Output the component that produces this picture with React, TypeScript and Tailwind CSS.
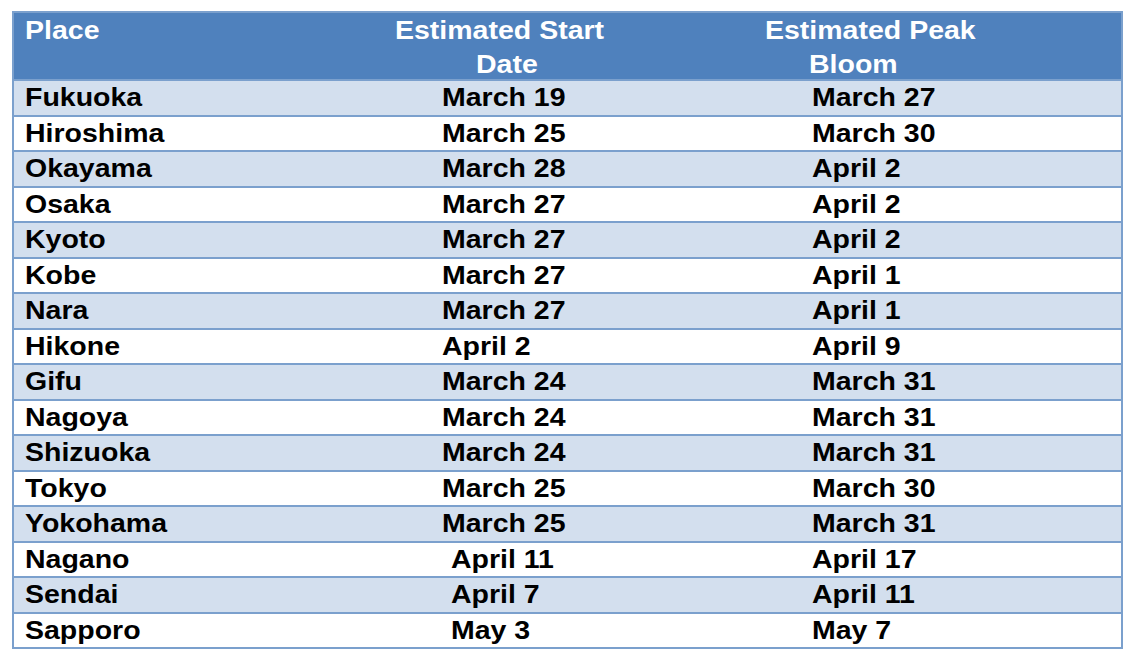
import React from "react";

type Row = { place: string; start: string; startOff?: number; peak: string };

const rows: Row[] = [
  { place: "Fukuoka", start: "March 19", peak: "March 27" },
  { place: "Hiroshima", start: "March 25", peak: "March 30" },
  { place: "Okayama", start: "March 28", peak: "April 2" },
  { place: "Osaka", start: "March 27", peak: "April 2" },
  { place: "Kyoto", start: "March 27", peak: "April 2" },
  { place: "Kobe", start: "March 27", peak: "April 1" },
  { place: "Nara", start: "March 27", peak: "April 1" },
  { place: "Hikone", start: "April 2", peak: "April 9" },
  { place: "Gifu", start: "March 24", peak: "March 31" },
  { place: "Nagoya", start: "March 24", peak: "March 31" },
  { place: "Shizuoka", start: "March 24", peak: "March 31" },
  { place: "Tokyo", start: "March 25", peak: "March 30" },
  { place: "Yokohama", start: "March 25", peak: "March 31" },
  { place: "Nagano", start: "April 11", startOff: 1, peak: "April 17" },
  { place: "Sendai", start: "April 7", startOff: 1, peak: "April 11" },
  { place: "Sapporo", start: "May 3", startOff: 1, peak: "May 7" },
];

function T({ children }: { children: React.ReactNode }) {
  return (
    <span className="inline-block whitespace-nowrap origin-left scale-x-[1.14]">
      {children}
    </span>
  );
}

export default function App() {
  return (
    <div
      className="w-[1134px] h-[664px] bg-white pt-[11px] pl-[12px] font-bold text-[25px] text-black"
      style={{ fontFamily: '"Liberation Sans", Arial, sans-serif' }}
    >
      <div className="w-[1111px] border-x-2 border-t-2 border-[#7BA0CD]">
        <div className="flex h-[68px] bg-[#4F81BD] border-b-2 border-[#7BA0CD] text-white leading-[34px]">
          <div className="w-[366px] pl-[11px]">
            <T>Place</T>
          </div>
          <div className="w-[370px]">
            <div className="pl-[15px]">
              <T>Estimated Start</T>
            </div>
            <div className="pl-[96px]">
              <T>Date</T>
            </div>
          </div>
          <div className="flex-1">
            <div className="pl-[15px]">
              <T>Estimated Peak</T>
            </div>
            <div className="pl-[59px]">
              <T>Bloom</T>
            </div>
          </div>
        </div>
        {rows.map((r, i) => (
          <div
            key={r.place}
            className={`flex h-[35.5px] border-b-2 border-[#7BA0CD] leading-[30px] pt-[1px] ${
              i % 2 === 0 ? "bg-[#D3DFEE]" : "bg-white"
            }`}
          >
            <div className="w-[366px] pl-[11px]">
              <T>{r.place}</T>
            </div>
            <div className={`w-[370px] ${r.startOff ? "pl-[71px]" : "pl-[62px]"}`}>
              <T>{r.start}</T>
            </div>
            <div className="flex-1 pl-[62px]">
              <T>{r.peak}</T>
            </div>
          </div>
        ))}
      </div>
    </div>
  );
}
